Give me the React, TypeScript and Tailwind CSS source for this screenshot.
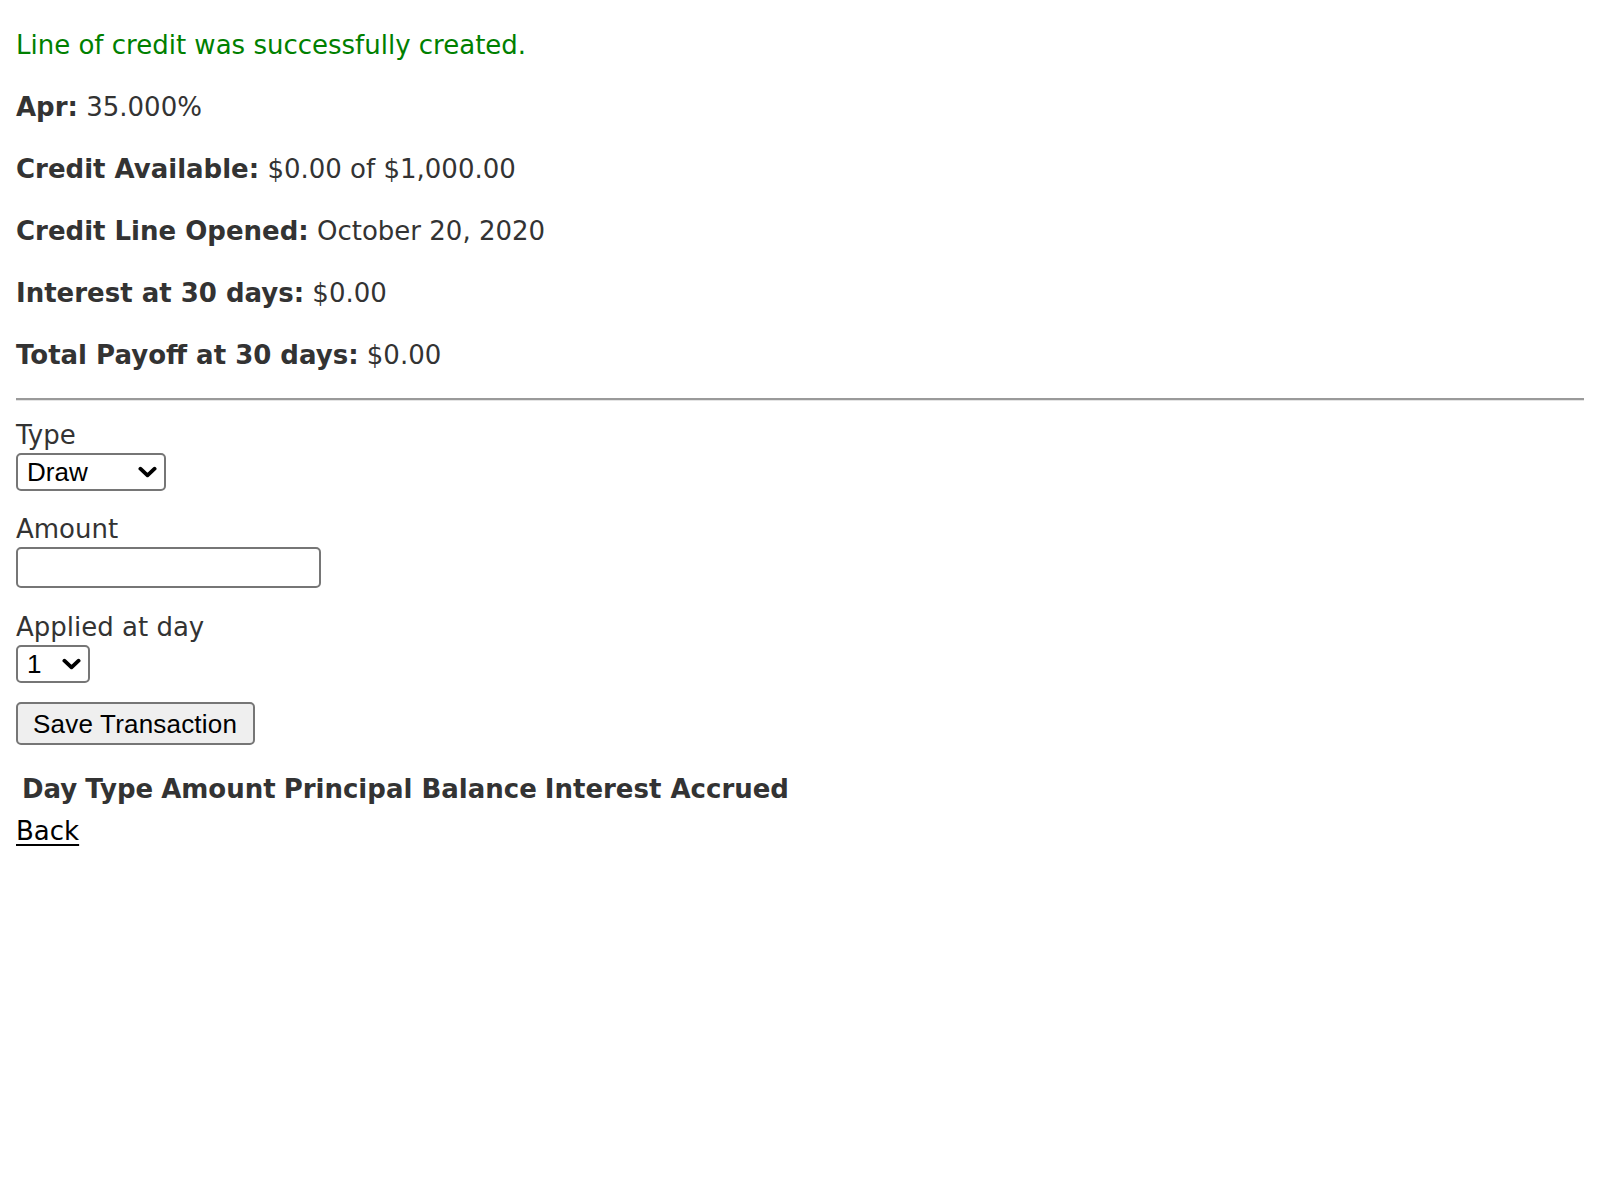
import { useState } from "react";

const verdana = "font-['DejaVu_Sans',Verdana,sans-serif]";
const system = "font-['Liberation_Sans',Arial,sans-serif]";

function Chevron() {
  return (
    <svg
      viewBox="0 0 20 12"
      className="pointer-events-none absolute top-1/2 right-[9px] h-[12px] w-[19px] -translate-y-1/2"
      fill="none"
      stroke="#000"
      strokeWidth={4}
      strokeLinecap="round"
      strokeLinejoin="round"
    >
      <path d="M2.5 2.5 L10 9.5 L17.5 2.5" />
    </svg>
  );
}

function Select({
  value,
  options,
  width,
  onChange,
}: {
  value: string;
  options: string[];
  width: string;
  onChange: (v: string) => void;
}) {
  return (
    <div className={`relative ${width}`}>
      <select
        value={value}
        onChange={(e) => onChange(e.target.value)}
        className={`${system} block h-[38px] w-full appearance-none rounded-[5px] border-2 border-[#767676] bg-white pl-[9px] text-[26px] leading-[30px] text-black outline-none`}
      >
        {options.map((o) => (
          <option key={o} value={o}>
            {o}
          </option>
        ))}
      </select>
      <Chevron />
    </div>
  );
}

export default function App() {
  const [type, setType] = useState("Draw");
  const [day, setDay] = useState("1");
  const [amount, setAmount] = useState("");

  const days = Array.from({ length: 30 }, (_, i) => String(i + 1));

  return (
    <div
      className={`${verdana} min-h-[1200px] bg-white px-4 text-[26px] leading-[36px] text-[#333]`}
    >
      <p className="mt-[27px] mb-[26px] text-[#008000]">
        Line of credit was successfully created.
      </p>

      <p className="my-[26px]">
        <strong>Apr:</strong> 35.000%
      </p>
      <p className="my-[26px]">
        <strong>Credit Available:</strong> $0.00 of $1,000.00
      </p>
      <p className="my-[26px]">
        <strong>Credit Line Opened:</strong> October 20, 2020
      </p>
      <p className="my-[26px]">
        <strong>Interest at 30 days:</strong> $0.00
      </p>
      <p className="mt-[26px] mb-[25px]">
        <strong>Total Payoff at 30 days:</strong> $0.00
      </p>

      <hr className="my-4 h-0 border-t-2 border-b border-t-[#9a9a9a] border-b-[#e4e4e4]" />

      <form onSubmit={(e) => e.preventDefault()}>
        {/* Type */}
        <div className="mb-[20px]">
          <label className="block">Type</label>
          <Select
            value={type}
            options={["Draw", "Payment"]}
            width="w-[150px]"
            onChange={setType}
          />
        </div>

        {/* Amount */}
        <div className="mb-[21px]">
          <label className="block">Amount</label>
          <input
            type="text"
            value={amount}
            onChange={(e) => setAmount(e.target.value)}
            className={`${system} block h-[41px] w-[305px] rounded-[5px] border-2 border-[#767676] bg-white px-2 text-[26px] text-black outline-none`}
          />
        </div>

        {/* Applied at day */}
        <div className="mb-[19px]">
          <label className="block">Applied at day</label>
          <Select value={day} options={days} width="w-[74px]" onChange={setDay} />
        </div>

        <div className="mb-[20px]">
          <button
            type="submit"
            className={`${system} h-[43px] rounded-[5px] border-2 border-[#767676] bg-[#efefef] pr-[16px] pl-[15px] text-[26px] leading-[30px] tracking-[0.2px] text-black`}
          >
            Save Transaction
          </button>
        </div>
      </form>

      <table className="border-separate border-spacing-[4px]">
        <thead>
          <tr>
            <th className="p-[2px] text-left font-bold">Day</th>
            <th className="p-[2px] text-left font-bold">Type</th>
            <th className="p-[2px] text-left font-bold">Amount</th>
            <th className="p-[2px] text-left font-bold">Principal Balance</th>
            <th className="p-[2px] text-left font-bold">Interest Accrued</th>
          </tr>
        </thead>
        <tbody />
      </table>

      <a href="#" className="text-black underline underline-offset-[4px]">
        Back
      </a>
    </div>
  );
}
